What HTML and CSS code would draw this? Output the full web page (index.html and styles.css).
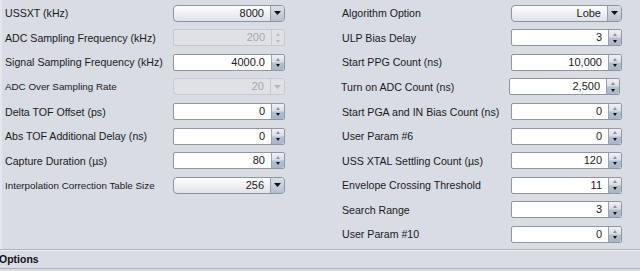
FILE: index.html
```html
<!DOCTYPE html>
<html>
<head>
<meta charset="utf-8">
<link rel="stylesheet" href="styles.css">
</head>
<body>
<div class="panel">
  <div class="col col-left">
    <div class="row"><span class="lbl">USSXT (kHz)</span>
      <div class="combo"><span class="val">8000</span><span class="cbtn"><svg width="7" height="4" viewBox="0 0 7 4"><path d="M0 0H7L3.5 4Z" fill="#111"/></svg></span></div></div>
    <div class="row"><span class="lbl">ADC Sampling Frequency (kHz)</span>
      <div class="spin disabled"><span class="val">200</span><span class="sbtn"><span class="up"></span><span class="dn"></span></span></div></div>
    <div class="row"><span class="lbl">Signal Sampling Frequency (kHz)</span>
      <div class="spin"><span class="val">4000.0</span><span class="sbtn"><span class="up"></span><span class="dn"></span></span></div></div>
    <div class="row"><span class="lbl small">ADC Over Sampling Rate</span>
      <div class="combo disabled"><span class="val">20</span><span class="cbtn"><svg width="7" height="4" viewBox="0 0 7 4"><path d="M0 0H7L3.5 4Z" fill="#b4b7bc"/></svg></span></div></div>
    <div class="row"><span class="lbl">Delta TOF Offset (ps)</span>
      <div class="spin"><span class="val">0</span><span class="sbtn"><span class="up"></span><span class="dn"></span></span></div></div>
    <div class="row"><span class="lbl">Abs TOF Additional Delay (ns)</span>
      <div class="spin"><span class="val">0</span><span class="sbtn"><span class="up"></span><span class="dn"></span></span></div></div>
    <div class="row"><span class="lbl">Capture Duration (µs)</span>
      <div class="spin"><span class="val">80</span><span class="sbtn"><span class="up"></span><span class="dn"></span></span></div></div>
    <div class="row"><span class="lbl small">Interpolation Correction Table Size</span>
      <div class="combo"><span class="val">256</span><span class="cbtn"><svg width="7" height="4" viewBox="0 0 7 4"><path d="M0 0H7L3.5 4Z" fill="#111"/></svg></span></div></div>
  </div>
  <div class="col col-right">
    <div class="row"><span class="lbl">Algorithm Option</span>
      <div class="combo"><span class="val">Lobe</span><span class="cbtn"><svg width="7" height="4" viewBox="0 0 7 4"><path d="M0 0H7L3.5 4Z" fill="#111"/></svg></span></div></div>
    <div class="row"><span class="lbl">ULP Bias Delay</span>
      <div class="spin"><span class="val">3</span><span class="sbtn"><span class="up"></span><span class="dn"></span></span></div></div>
    <div class="row"><span class="lbl">Start PPG Count (ns)</span>
      <div class="spin"><span class="val">10,000</span><span class="sbtn"><span class="up"></span><span class="dn"></span></span></div></div>
    <div class="row shifted"><span class="lbl">Turn on ADC Count (ns)</span>
      <div class="spin"><span class="val">2,500</span><span class="sbtn"><span class="up"></span><span class="dn"></span></span></div></div>
    <div class="row"><span class="lbl">Start PGA and IN Bias Count (ns)</span>
      <div class="spin"><span class="val">0</span><span class="sbtn"><span class="up"></span><span class="dn"></span></span></div></div>
    <div class="row"><span class="lbl">User Param #6</span>
      <div class="spin"><span class="val">0</span><span class="sbtn"><span class="up"></span><span class="dn"></span></span></div></div>
    <div class="row"><span class="lbl">USS XTAL Settling Count (µs)</span>
      <div class="spin"><span class="val">120</span><span class="sbtn"><span class="up"></span><span class="dn"></span></span></div></div>
    <div class="row"><span class="lbl">Envelope Crossing Threshold</span>
      <div class="spin"><span class="val">11</span><span class="sbtn"><span class="up"></span><span class="dn"></span></span></div></div>
    <div class="row"><span class="lbl">Search Range</span>
      <div class="spin"><span class="val">3</span><span class="sbtn"><span class="up"></span><span class="dn"></span></span></div></div>
    <div class="row"><span class="lbl">User Param #10</span>
      <div class="spin"><span class="val">0</span><span class="sbtn"><span class="up"></span><span class="dn"></span></span></div></div>
  </div>
</div>
<div class="options">Options</div>
</body>
</html>
```
FILE: styles.css
```css
html, body {
  margin: 0;
  padding: 0;
  background: #d8dce3;
  font-family: "Liberation Sans", Arial, sans-serif;
  color: #1a1a1a;
  overflow: hidden;
}
.panel {
  display: grid;
  grid-template-columns: 320px 320px;
  height: 249px;
  box-sizing: border-box;
  border-left: 2px solid #e3e6eb;
}
.col {
  padding-top: 1px;
  display: flex;
  flex-direction: column;
}
.col-left { padding-left: 3px; }
.col-right { padding-left: 20px; }
.row {
  height: 24.57px;
  display: flex;
  align-items: center;
}
.col-left .lbl { width: 168px; }
.col-right .lbl { width: 169px; }
.row.shifted .lbl { margin-left: -1px; width: 168px; }
.lbl {
  font-size: 10.6px;
  white-space: nowrap;
  flex: none;
}
.lbl.small { font-size: 9.8px; }
.col-left .combo, .col-left .spin { width: 112px; }
.col-right .combo, .col-right .spin { width: 111px; }
.combo, .spin {
  box-sizing: border-box;
  height: 17px;
  display: flex;
  font-size: 11px;
  flex: none;
}
.val {
  flex: 1;
  text-align: right;
  padding-right: 6px;
  line-height: 15px;
  white-space: nowrap;
}
.combo {
  border: 1px solid #8d929b;
  border-radius: 4px;
  background: linear-gradient(#fdfdfe, #eef0f3 50%, #dfe2e7);
  overflow: hidden;
}
.cbtn {
  width: 13px;
  border-left: 1px solid #98a0ad;
  background: linear-gradient(#d9e0ea, #b4bfcf);
  display: flex;
  align-items: center;
  justify-content: center;
}
.spin {
  border: 1px solid #9196a0;
  border-radius: 2px;
  background: #fff;
}
.sbtn {
  width: 12px;
  border-left: 1px solid #9aa1ac;
  display: flex;
  flex-direction: column;
  background: linear-gradient(#eef1f5, #d9dfe8 45%, #b3bfcf 55%, #a9b6c8);
  border-radius: 0 2px 2px 0;
}
.up, .dn {
  flex: 1;
  position: relative;
}
.up::after, .dn::after {
  content: "";
  position: absolute;
  left: 50%;
  top: 50%;
  margin-left: -2.5px;
  border-left: 2.5px solid transparent;
  border-right: 2.5px solid transparent;
}
.up::after {
  margin-top: -1px;
  border-bottom: 3px solid #8e939b;
}
.dn::after {
  margin-top: -2px;
  border-top: 3px solid #111;
}
.disabled {
  background: #dfe1e5;
  border-color: #c6c9ce;
  color: #a5a8ad;
}
.disabled .sbtn, .disabled .cbtn {
  background: #dfe1e5;
  border-left-color: #c6c9ce;
}
.disabled .up::after { border-bottom-color: #b8bbc0; }
.disabled .dn::after { border-top-color: #b8bbc0; }
.options {
  height: 18px;
  border-top: 1px solid #aeb2b9;
  box-shadow: inset 0 1px 0 #eef0f3;
  border-bottom: 1px solid #aeb2b9;
  font-family: "Liberation Sans", Arial, sans-serif;
  font-weight: bold;
  font-size: 10.5px;
  line-height: 18px;
  text-indent: -1px;
  color: #111;
}
```
